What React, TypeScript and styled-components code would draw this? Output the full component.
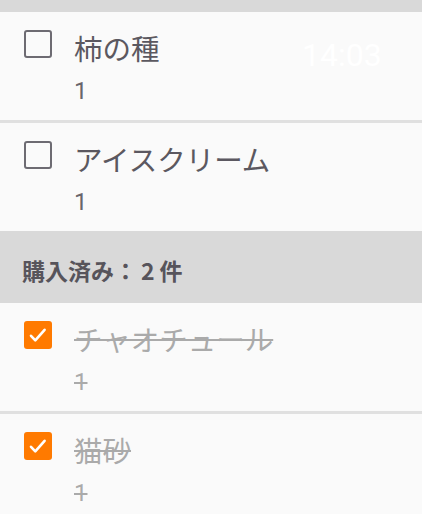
import React from "react";
import styled, { createGlobalStyle } from "styled-components";

const GlobalStyle = createGlobalStyle`
  html, body {
    margin: 0;
    padding: 0;
    background: #d9d9d9;
  }
  body {
    font-family: Roboto, "Noto Sans CJK JP", sans-serif;
  }
`;

const Screen = styled.div`
  position: relative;
  width: 422px;
  height: 514px;
  overflow: hidden;
  background: #d9d9d9;
  display: flex;
  flex-direction: column;
`;

const TopGap = styled.div`
  height: 12px;
  flex: none;
`;

const Group = styled.div`
  display: flex;
  flex-direction: column;
  flex: none;
`;

const Card = styled.div<{ $last?: boolean }>`
  box-sizing: border-box;
  flex: none;
  background: #fafafa;
  border-bottom: ${(p) => (p.$last ? "none" : "3px solid #e0e0e0")};
  height: ${(p) => (p.$last ? "108px" : "111px")};
  display: grid;
  grid-template-columns: 28px 1fr;
  column-gap: 22px;
  padding: 18px 16px 0 24px;
  align-items: start;
`;

const Box = styled.div<{ $checked?: boolean }>`
  box-sizing: border-box;
  width: 28px;
  height: 28px;
  border-radius: 3px;
  border: ${(p) => (p.$checked ? "none" : "2.5px solid #6d6b72")};
  background: ${(p) => (p.$checked ? "#ff7a00" : "transparent")};
  display: flex;
  align-items: center;
  justify-content: center;
`;

const Texts = styled.div<{ $done?: boolean }>`
  display: flex;
  flex-direction: column;
  color: ${(p) => (p.$done ? "#aaaaaa" : "#5b5860")};
  text-decoration: ${(p) => (p.$done ? "line-through" : "none")};
  text-decoration-thickness: 2px;
`;

const Title = styled.div`
  font-family: "Noto Sans CJK JP", sans-serif;
  font-size: 28.5px;
  line-height: 36px;
  margin-bottom: 10px;
  white-space: nowrap;
`;

const Qty = styled.div<{ $done?: boolean }>`
  font-family: Roboto, sans-serif;
  font-size: 24px;
  line-height: 30px;
  color: ${(p) => (p.$done ? "#aaaaaa" : "#68656c")};
`;

const SectionHeader = styled.div`
  box-sizing: border-box;
  height: 72px;
  flex: none;
  background: #d9d9d9;
  display: flex;
  align-items: center;
  padding: 6px 22px 0;
  font-family: "Noto Sans CJK JP", sans-serif;
  font-weight: 700;
  font-size: 23px;
  color: #57545b;
  white-space: nowrap;
`;

const Count = styled.span`
  font-family: "Noto Sans CJK JP", sans-serif;
  margin: 0 5px 0 4px;
`;

const Clock = styled.div`
  position: absolute;
  top: 39px;
  left: 302px;
  font-family: Roboto, sans-serif;
  font-size: 32px;
  line-height: 32px;
  color: #ffffff;
`;

const Check = () => (
  <svg width="28" height="28" viewBox="0 0 28 28">
    <path
      d="M7 14.8 L11.3 19.4 L20.6 8.8"
      fill="none"
      stroke="#ffffff"
      strokeWidth="2.6"
      strokeLinecap="round"
      strokeLinejoin="round"
    />
  </svg>
);

type Item = { name: string; qty: number; done: boolean };

const Row = ({ item, last }: { item: Item; last?: boolean }) => (
  <Card $last={last}>
    <Box $checked={item.done}>{item.done && <Check />}</Box>
    <Texts $done={item.done}>
      <Title>{item.name}</Title>
      <Qty $done={item.done}>{item.qty}</Qty>
    </Texts>
  </Card>
);

const todo: Item[] = [
  { name: "柿の種", qty: 1, done: false },
  { name: "アイスクリーム", qty: 1, done: false },
];

const bought: Item[] = [
  { name: "チャオチュール", qty: 1, done: true },
  { name: "猫砂", qty: 1, done: true },
];

export default function App() {
  return (
    <>
      <GlobalStyle />
      <Screen>
        <TopGap />
        <Group>
          {todo.map((it, i) => (
            <Row key={it.name} item={it} last={i === todo.length - 1} />
          ))}
        </Group>
        <SectionHeader>
          購入済み：<Count>2</Count>件
        </SectionHeader>
        <Group>
          {bought.map((it, i) => (
            <Row key={it.name} item={it} last={i === bought.length - 1} />
          ))}
        </Group>
        <Clock>14:03</Clock>
      </Screen>
    </>
  );
}
